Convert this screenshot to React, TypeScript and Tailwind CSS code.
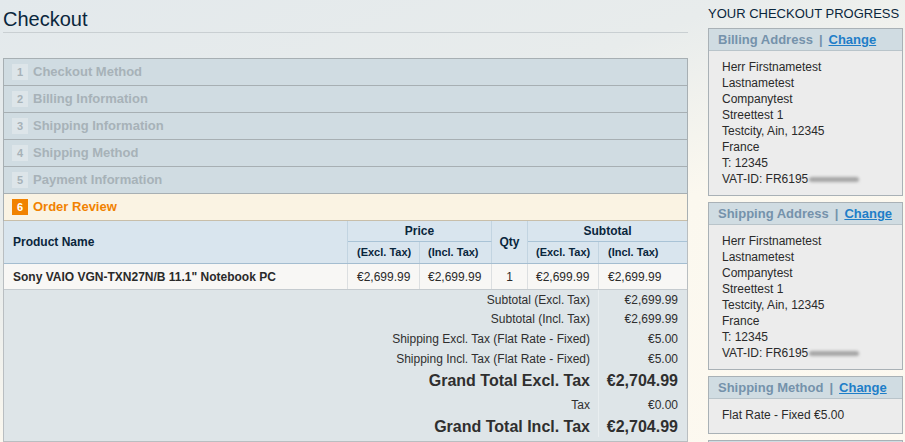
import React from 'react';

const font = "font-['Liberation_Sans',Arial,sans-serif]";

const steps = ['Checkout Method', 'Billing Information', 'Shipping Information', 'Shipping Method', 'Payment Information'];

const address = [
  'Herr Firstnametest',
  'Lastnametest',
  'Companytest',
  'Streettest 1',
  'Testcity, Ain, 12345',
  'France',
  'T: 12345',
];

const totals: { label: string; value: string; grand?: boolean; h: string }[] = [
  { label: 'Subtotal (Excl. Tax)', value: '€2,699.99', h: 'h-[19px]' },
  { label: 'Subtotal (Incl. Tax)', value: '€2,699.99', h: 'h-[20px]' },
  { label: 'Shipping Excl. Tax (Flat Rate - Fixed)', value: '€5.00', h: 'h-[20px]' },
  { label: 'Shipping Incl. Tax (Flat Rate - Fixed)', value: '€5.00', h: 'h-[20px]' },
  { label: 'Grand Total Excl. Tax', value: '€2,704.99', grand: true, h: 'h-[24px]' },
  { label: 'Tax', value: '€0.00', h: 'h-[24px]' },
  { label: 'Grand Total Incl. Tax', value: '€2,704.99', grand: true, h: 'h-[20px]' },
];

const Blur = () => (
  <span className="inline-block align-middle ml-[1px] w-[50px] h-[5px] rounded-full bg-[#a5a5a5] blur-[1.5px]" />
);

const ProgressBox: React.FC<{ title: string; lines: React.ReactNode[]; pb?: string }> = ({ title, lines, pb = 'pb-[8px]' }) => (
  <div className="border border-[#a9b1b6] bg-[#ececec] mb-[6px]">
    <div className="h-[22px] flex items-center pl-[9px] bg-[#d0dce2] border-b border-[#b9c4ca] text-[13px] font-bold text-[#7592ab]">
      <span>{title}</span>
      <span className="mx-[6px]">|</span>
      <a href="#" className="text-[#1e7ec8] underline">Change</a>
    </div>
    <div className={`pl-[13px] pt-[8px] ${pb} text-[12px] leading-[16px] text-[#2a2a2a]`}>
      {lines.map((l, i) => (
        <div key={i}>{l}</div>
      ))}
    </div>
  </div>
);

export default function App() {
  return (
    <div
      className={`${font} w-[905px] h-[442px] overflow-hidden flex bg-[linear-gradient(160deg,#e3e9ec_0%,#e8ecec_35%,#fbf8ef_58%,#fdf9f0_100%)]`}
    >
      {/* main column */}
      <div className="w-[688px] pl-[3px] shrink-0">
        <div className="pt-[7px] leading-[24px] pb-[1px] border-b border-[#c9cfd2] text-[20px] text-[#0a263c]">Checkout</div>

        <div className="mt-[25px] border-x border-[#a7afb3]">
          {steps.map((s, i) => (
            <div key={s} className="h-[27px] flex items-center pl-[8px] border-t border-[#a7afb3] bg-[#d0dce2]">
              <span className="w-[16px] h-[16px] flex items-center justify-center bg-[#dde5e9] text-[11px] font-bold text-[#a7b2b8]">
                {i + 1}
              </span>
              <span className="ml-[5px] text-[13px] font-bold text-[#a7b2b8]">{s}</span>
            </div>
          ))}
          <div className="h-[28px] flex items-center pl-[8px] border-t border-[#a7afb3] border-b border-b-[#c8bea9] bg-[#faf3e3]">
            <span className="w-[16px] h-[16px] flex items-center justify-center bg-[#f18200] text-[11px] font-bold text-white">6</span>
            <span className="ml-[5px] text-[13px] font-bold text-[#f18200]">Order Review</span>
          </div>
        </div>

        {/* order table */}
        <div className="border-x border-b border-[#b9bec1]">
          <div className="grid grid-cols-[344px_72px_72px_36px_71px_88px] grid-rows-[21px_21px] bg-[#d9e5ee] border-b border-[#a4bdd0] text-[#0a263c] font-bold">
            <div className="row-span-2 flex items-center pl-[9px] text-[12px] border-r border-[#c2d4e1]">Product Name</div>
            <div className="col-span-2 flex items-center justify-center text-[12px] border-r border-[#c2d4e1] border-b border-b-[#a9c3d6]">Price</div>
            <div className="row-span-2 flex items-center justify-center text-[12px] border-r border-[#c2d4e1]">Qty</div>
            <div className="col-span-2 flex items-center justify-center text-[12px] border-b border-b-[#a9c3d6]">Subtotal</div>
            <div className="flex items-center pl-[9px] text-[11px] border-r border-[#c2d4e1]">(Excl. Tax)</div>
            <div className="flex items-center pl-[8px] text-[11px] border-r border-[#c2d4e1]">(Incl. Tax)</div>
            <div className="flex items-center pl-[8px] text-[11px] border-r border-[#c2d4e1]">(Excl. Tax)</div>
            <div className="flex items-center pl-[9px] text-[11px]">(Incl. Tax)</div>
          </div>

          <div className="grid grid-cols-[344px_72px_72px_36px_71px_88px] h-[26px] bg-[#f8f7f5] border-b border-[#c5cbcf] text-[12px] text-[#2a2a2a]">
            <div className="flex items-center pl-[9px] font-bold border-r border-[#dcdfe1]">Sony VAIO VGN-TXN27N/B 11.1&quot; Notebook PC</div>
            <div className="flex items-center pl-[9px] border-r border-[#dcdfe1]">€2,699.99</div>
            <div className="flex items-center pl-[8px] border-r border-[#dcdfe1]">€2,699.99</div>
            <div className="flex items-center justify-center border-r border-[#dcdfe1]">1</div>
            <div className="flex items-center pl-[8px] border-r border-[#dcdfe1]">€2,699.99</div>
            <div className="flex items-center pl-[9px]">€2,699.99</div>
          </div>

          <div className="bg-[#dee5e8] pb-[4px] text-[#2f2f2f]">
            {totals.map((t) => (
              <div key={t.label} className={`flex ${t.h}`}>
                <div
                  className={`w-[595px] flex items-center justify-end pr-[8px] border-r border-[#e9eef0] ${
                    t.grand ? 'text-[16px] font-bold' : 'text-[12px]'
                  }`}
                >
                  {t.label}
                </div>
                <div
                  className={`flex-1 flex items-center justify-end pr-[9px] ${
                    t.grand ? 'text-[16px] font-bold' : 'text-[12px]'
                  }`}
                >
                  {t.value}
                </div>
              </div>
            ))}
          </div>
        </div>
      </div>

      {/* progress sidebar */}
      <div className="ml-[20px] w-[195px] shrink-0">
        <div className="h-[28px] pt-[6px] leading-[16px] text-[13px] text-[#0a263c] uppercase">Your Checkout Progress</div>
        <ProgressBox
          title="Billing Address"
          lines={[...address, <span key="vat">VAT-ID: FR6195<Blur /></span>]}
        />
        <ProgressBox
          title="Shipping Address"
          lines={[...address, <span key="vat">VAT-ID: FR6195<Blur /></span>]}
        />
        <ProgressBox title="Shipping Method" lines={['Flat Rate - Fixed €5.00']} pb="pb-[10px]" />
        {/* next section, only its top edge shows */}
        <div className="mt-[1px] h-[22px] border border-[#a9b1b6] bg-[#d0dce2]" />
      </div>
    </div>
  );
}
